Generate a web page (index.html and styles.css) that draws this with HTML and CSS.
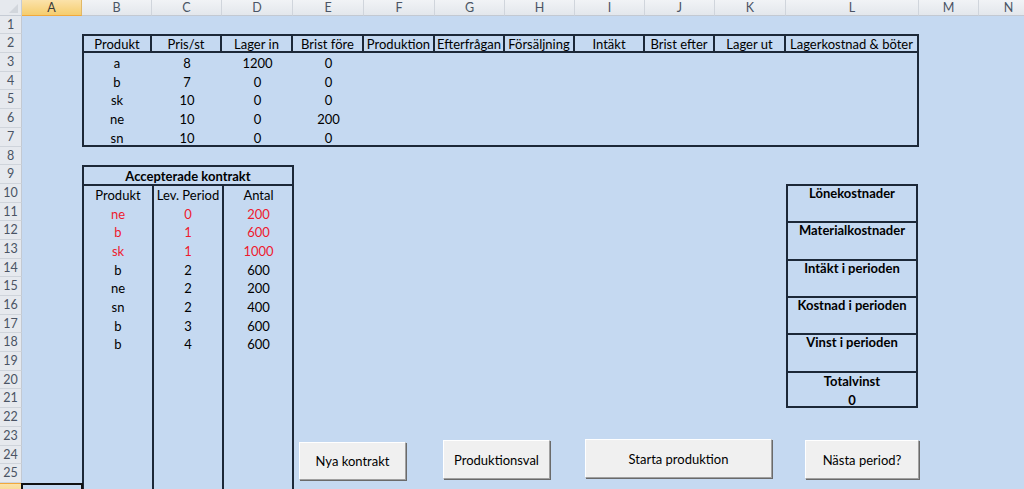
FILE: index.html
```html
<!DOCTYPE html>
<html lang="sv">
<head>
<meta charset="utf-8">
<title>Produktionsspel</title>
<link rel="stylesheet" href="styles.css">
</head>
<body>
<div class="sheet">
  <div class="corner"><span class="tri"></span></div>
  <div class="ch sel">A</div>
  <div class="ch">B</div>
  <div class="ch">C</div>
  <div class="ch">D</div>
  <div class="ch">E</div>
  <div class="ch">F</div>
  <div class="ch">G</div>
  <div class="ch">H</div>
  <div class="ch">I</div>
  <div class="ch">J</div>
  <div class="ch">K</div>
  <div class="ch">L</div>
  <div class="ch">M</div>
  <div class="ch">N</div>

  <div class="rowheads">
    <div class="rh">1</div><div class="rh">2</div><div class="rh">3</div><div class="rh">4</div><div class="rh">5</div>
    <div class="rh">6</div><div class="rh">7</div><div class="rh">8</div><div class="rh">9</div><div class="rh">10</div>
    <div class="rh">11</div><div class="rh">12</div><div class="rh">13</div><div class="rh">14</div><div class="rh">15</div>
    <div class="rh">16</div><div class="rh">17</div><div class="rh">18</div><div class="rh">19</div><div class="rh">20</div>
    <div class="rh">21</div><div class="rh">22</div><div class="rh">23</div><div class="rh">24</div><div class="rh">25</div>
    <div class="rh sel"></div>
  </div>

  <div class="main-table">
    <div class="th">Produkt</div>
    <div class="th">Pris/st</div>
    <div class="th">Lager in</div>
    <div class="th">Brist före</div>
    <div class="th">Produktion</div>
    <div class="th">Efterfrågan</div>
    <div class="th">Försäljning</div>
    <div class="th">Intäkt</div>
    <div class="th">Brist efter</div>
    <div class="th">Lager ut</div>
    <div class="th last">Lagerkostnad &amp; böter</div>

    <div class="td">a</div><div class="td">8</div><div class="td">1200</div><div class="td">0</div><div class="td fill"></div>
    <div class="td">b</div><div class="td">7</div><div class="td">0</div><div class="td">0</div><div class="td fill"></div>
    <div class="td">sk</div><div class="td">10</div><div class="td">0</div><div class="td">0</div><div class="td fill"></div>
    <div class="td">ne</div><div class="td">10</div><div class="td">0</div><div class="td">200</div><div class="td fill"></div>
    <div class="td">sn</div><div class="td">10</div><div class="td">0</div><div class="td">0</div><div class="td fill"></div>
  </div>

  <div class="contract">
    <div class="ct-title">Accepterade kontrakt</div>
    <div class="ct-cols">
      <div class="ct-col">
        <div class="ct-cell">Produkt</div>
        <div class="ct-cell red">ne</div>
        <div class="ct-cell red">b</div>
        <div class="ct-cell red">sk</div>
        <div class="ct-cell">b</div>
        <div class="ct-cell">ne</div>
        <div class="ct-cell">sn</div>
        <div class="ct-cell">b</div>
        <div class="ct-cell">b</div>
      </div>
      <div class="ct-col">
        <div class="ct-cell">Lev. Period</div>
        <div class="ct-cell red">0</div>
        <div class="ct-cell red">1</div>
        <div class="ct-cell red">1</div>
        <div class="ct-cell">2</div>
        <div class="ct-cell">2</div>
        <div class="ct-cell">2</div>
        <div class="ct-cell">3</div>
        <div class="ct-cell">4</div>
      </div>
      <div class="ct-col">
        <div class="ct-cell">Antal</div>
        <div class="ct-cell red">200</div>
        <div class="ct-cell red">600</div>
        <div class="ct-cell red">1000</div>
        <div class="ct-cell">600</div>
        <div class="ct-cell">200</div>
        <div class="ct-cell">400</div>
        <div class="ct-cell">600</div>
        <div class="ct-cell">600</div>
      </div>
    </div>
  </div>

  <div class="summary">
    <div class="box"><div class="ct-cell">Lönekostnader</div></div>
    <div class="box"><div class="ct-cell">Materialkostnader</div></div>
    <div class="box"><div class="ct-cell">Intäkt i perioden</div></div>
    <div class="box"><div class="ct-cell">Kostnad i perioden</div></div>
    <div class="box"><div class="ct-cell">Vinst i perioden</div></div>
    <div class="box"><div class="ct-cell">Totalvinst</div><div class="ct-cell">0</div></div>
  </div>

  <div class="active-cell"></div>

  <button class="btn btn-nya">Nya kontrakt</button>
  <button class="btn btn-prod">Produktionsval</button>
  <button class="btn btn-start">Starta produktion</button>
  <button class="btn btn-next">Nästa period?</button>
</div>
</body>
</html>
```

FILE: styles.css
```css
html, body {
  margin: 0;
  padding: 0;
  width: 1024px;
  height: 489px;
  overflow: hidden;
  background: #c5d9f1;
}

body {
  font-family: Lato, "Liberation Sans", sans-serif;
  font-size: 13px;
  color: #000;
}

.sheet {
  position: relative;
  display: grid;
  grid-template-columns: 22px 60px 70px 70px 71px 71px 71px 70px 70px 70px 70px 71px 133px 60px 60px;
  grid-template-rows: 15.7px repeat(26, 18.7px);
  background: #c5d9f1;
  width: 1039px;
}

/* headers */
.corner {
  grid-column: 1;
  grid-row: 1;
  background: #e6e9ee;
  border-right: 1px solid #c6ccd5;
  border-bottom: 1px solid #c6ccd5;
  box-sizing: border-box;
  position: relative;
}
.tri {
  position: absolute;
  right: 3px;
  bottom: 2px;
  width: 0;
  height: 0;
  border-left: 9px solid transparent;
  border-bottom: 9px solid #d2d6dc;
}

.ch {
  grid-row: 1;
  background: linear-gradient(#f1f3f6, #e3e7ec);
  border-right: 1px solid #d0d5dc;
  border-bottom: 1px solid #c3c9d2;
  box-sizing: border-box;
  color: #4a5464;
  font-size: 12.5px;
  line-height: 15px;
  text-align: center;
}
.ch.sel {
  background: linear-gradient(#fbe2aa, #f5cd6e);
  border-bottom: 1px solid #f2a93b;
  border-right: 1px solid #e1b866;
  color: #3b3b3b;
}

.rowheads {
  grid-column: 1;
  grid-row: 2 / 28;
  display: grid;
  grid-template-rows: repeat(26, 18.7px);
}
.rh {
  background: #e6e9ee;
  border-right: 1px solid #c3c9d2;
  border-bottom: 1px solid #cfd4db;
  box-sizing: border-box;
  color: #4a5464;
  font-size: 12.5px;
  line-height: 18px;
  text-align: center;
}
.rh.sel {
  background: linear-gradient(#fbe2aa, #f5cd6e);
  border-top: 1px solid #f2a93b;
}

/* main table */
.main-table {
  grid-column: 3 / 14;
  grid-row: 3 / 9;
  display: grid;
  grid-template-columns: 70px 70px 71px 71px 71px 70px 70px 70px 70px 71px 133px;
  grid-template-rows: repeat(6, 18.7px);
  box-shadow: inset 0 0 0 2px #1c2838;
}
.th {
  border-right: 2px solid #1c2838;
  border-bottom: 2px solid #1c2838;
  border-top: 2px solid #1c2838;
  box-sizing: border-box;
  text-align: center;
  line-height: 16px;
  white-space: nowrap;
}
.th:first-child {
  border-left: 2px solid #1c2838;
}
.td {
  text-align: center;
  line-height: 20px;
}
.td.fill {
  grid-column: span 7;
}

/* contract table */
.contract {
  grid-column: 3 / 6;
  grid-row: 10 / 28;
  display: flex;
  flex-direction: column;
  border: 2px solid #1c2838;
  border-bottom: none;
  margin-right: -1px;
}
.ct-title {
  height: 18.7px;
  line-height: 18px;
  font-weight: bold;
  text-align: center;
  border-bottom: 2px solid #1c2838;
  box-sizing: border-box;
}
.ct-cols {
  flex: 1;
  display: grid;
  grid-template-columns: 68px 70px 71px;
}
.ct-col + .ct-col {
  border-left: 2px solid #1c2838;
}
.ct-cell {
  height: 18.7px;
  line-height: 19.5px;
  text-align: center;
  white-space: nowrap;
}
.red {
  color: #ee1a2e;
}

/* summary boxes */
.summary {
  grid-column: 13 / 14;
  grid-row: 11 / 23;
  display: grid;
  grid-template-rows: repeat(6, 1fr);
  box-shadow: inset 0 0 0 2px #1c2838;
  margin-right: 1px;
}
.box {
  font-weight: bold;
}
.box + .box {
  box-shadow: inset 0 2px 0 #1c2838;
}
.box .ct-cell {
  line-height: 19px;
}
.box:last-child .ct-cell {
  line-height: 21px;
}
.box:last-child .ct-cell + .ct-cell {
  line-height: 23px;
}

/* active cell */
.active-cell {
  grid-column: 2 / 3;
  grid-row: 27 / 28;
  border-top: 2px solid #111;
  border-left: 2px solid #111;
  border-right: 2px solid #111;
  margin-left: -1px;
  margin-right: -1px;
}

/* buttons (form controls floating over the sheet) */
.btn {
  position: absolute;
  margin: 0;
  padding: 0;
  font-family: Lato, "Liberation Sans", sans-serif;
  font-size: 13px;
  color: #000;
  background: #f0f0f0;
  border-top: 1px solid #ffffff;
  border-left: 1px solid #ffffff;
  border-right: 1px solid #a0a0a0;
  border-bottom: 1px solid #a0a0a0;
  box-shadow: 1px 1px 0 #6a6a6a;
  box-sizing: border-box;
}
.btn-nya {
  left: 299px;
  top: 442px;
  width: 107px;
  height: 38px;
}
.btn-prod {
  left: 443px;
  top: 440px;
  width: 107px;
  height: 39px;
}
.btn-start {
  left: 585px;
  top: 439px;
  width: 187px;
  height: 39px;
}
.btn-next {
  left: 805px;
  top: 440px;
  width: 114px;
  height: 39px;
}
```
